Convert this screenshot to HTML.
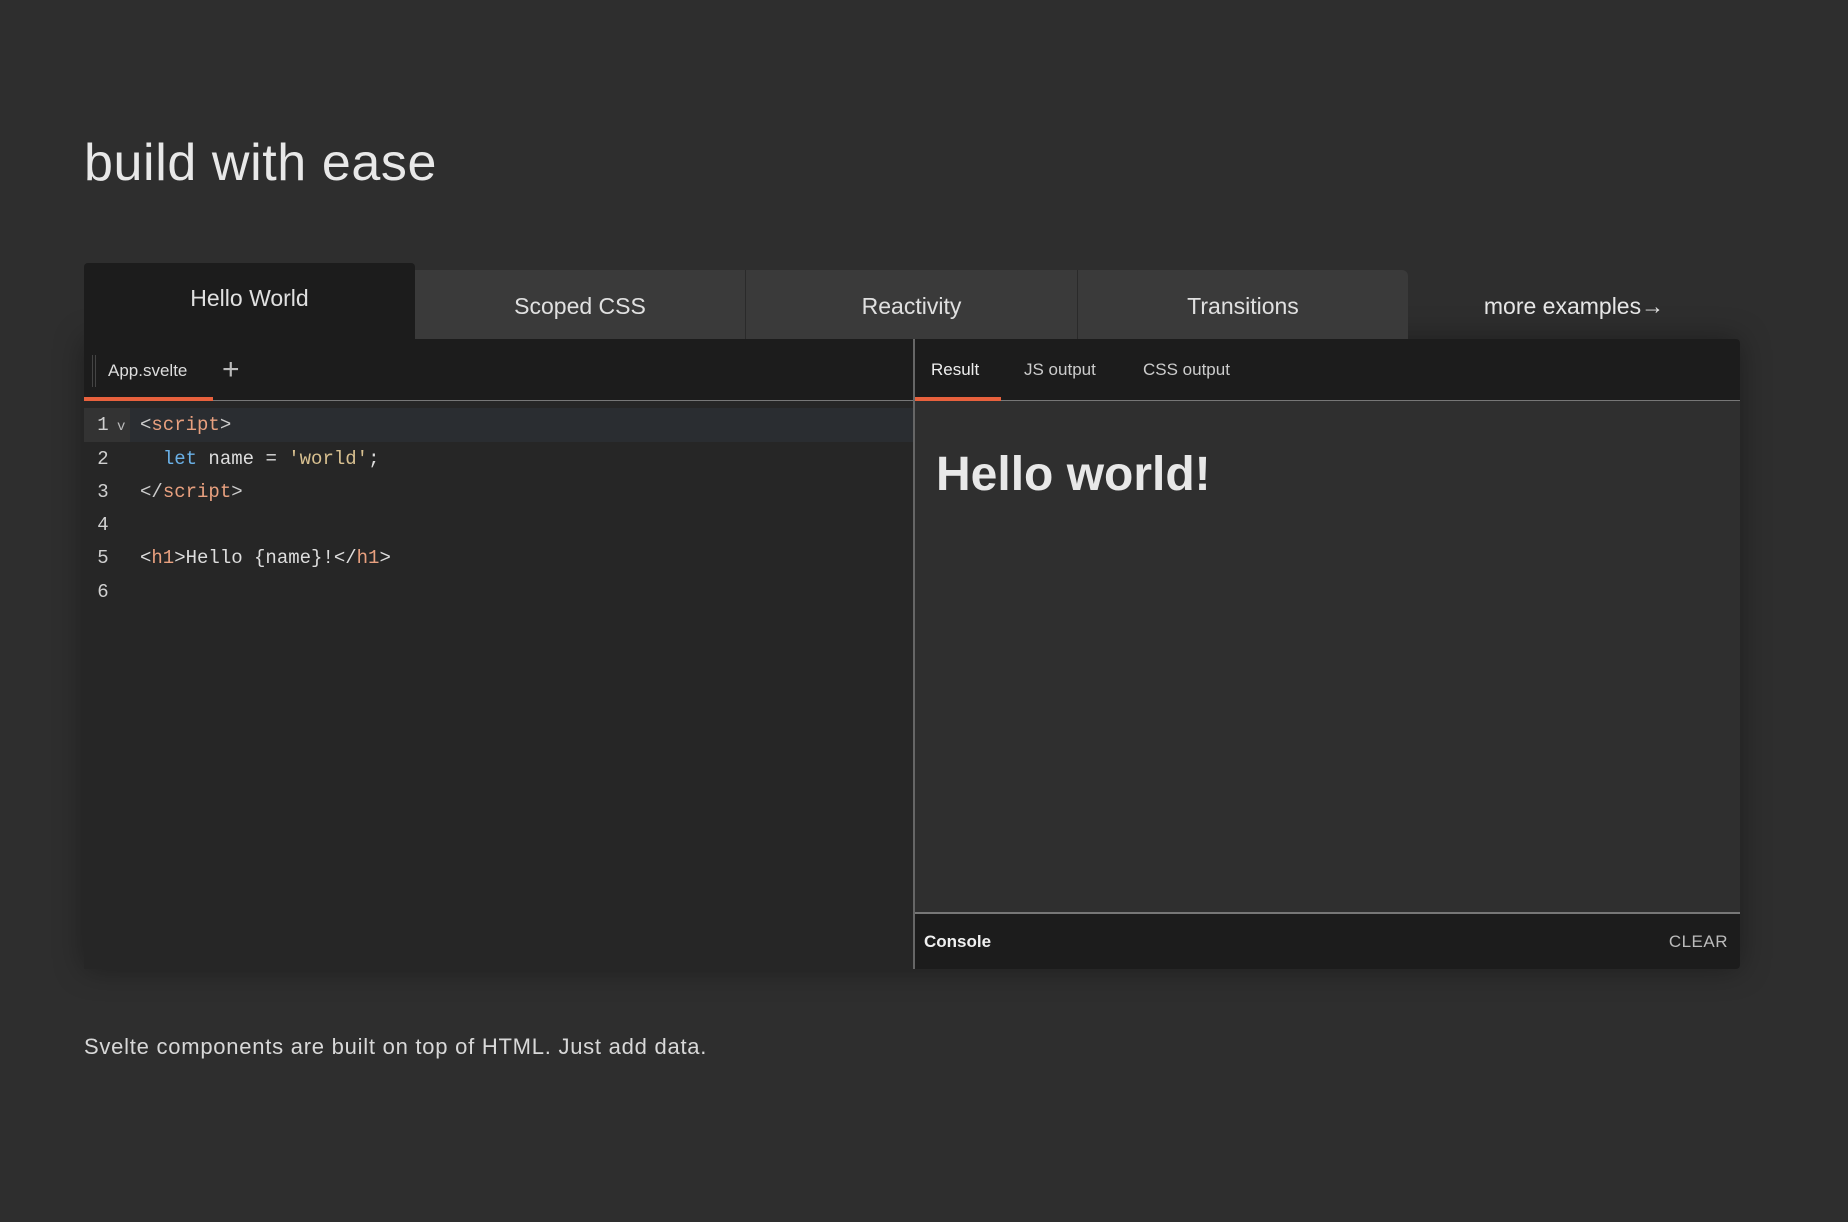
<!DOCTYPE html>
<html><head><meta charset="utf-8"><style>
*{margin:0;padding:0;box-sizing:border-box}
body{width:1848px;height:1222px;background:#2e2e2e;font-family:"Liberation Sans",sans-serif;color:#e6e6e6;position:relative;overflow:hidden}
.a{position:absolute}
h1{position:absolute;left:84px;top:133px;font-size:52px;font-weight:400;color:#e8e8e8;letter-spacing:0.6px}
.tab{position:absolute;top:270px;height:69px;background:#3a3a3a;color:#e0e0e0;font-size:23px;display:flex;align-items:center;justify-content:center;padding-top:4px}
.mono{font-family:"Liberation Mono",monospace;font-size:19px}
.ln{position:absolute;left:84px;width:46px;text-align:center;color:#d0d0d0;padding-right:8px}
.code{position:absolute;left:140px;color:#ddd;white-space:pre}
.t{color:#e8a07f}.k{color:#6ab0e6}.s{color:#d8c090}.g{color:#ccc}
</style></head><body>
<h1>build with ease</h1>
<div class="a" style="left:84px;top:339px;width:1656px;height:630px;box-shadow:0 0 30px rgba(0,0,0,.35);border-radius:0 4px 4px 4px"></div>
<div class="tab" style="left:84px;top:263px;width:331px;height:76px;background:#1c1c1c;border-radius:4px 4px 0 0;align-items:flex-start;padding-top:22px">Hello World</div>
<div class="tab" style="left:415px;width:330px">Scoped CSS</div>
<div class="tab" style="left:745px;width:332px;border-left:1px solid #2a2a2a">Reactivity</div>
<div class="tab" style="left:1077px;width:331px;border-left:1px solid #2a2a2a;border-radius:0 6px 0 0">Transitions</div>
<div class="a" style="left:1408px;top:270px;width:332px;height:69px;display:flex;align-items:center;justify-content:center;font-size:23px;color:#e6e6e6;padding-top:4px">more examples→</div>
<div class="a" style="left:84px;top:339px;width:829px;height:630px;background:#262626"></div>
<div class="a" style="left:84px;top:339px;width:829px;height:62px;background:#1c1c1c;border-bottom:1px solid #777"></div>
<div class="a" style="left:92px;top:355px;width:4px;height:32px;border-left:1px solid #444;border-right:1px solid #444"></div>
<div class="a" style="left:108px;top:361px;font-size:17px;color:#ddd">App.svelte</div>
<div class="a" style="left:222px;top:353px;font-size:30px;color:#bbb;font-weight:300">+</div>
<div class="a" style="left:84px;top:397px;width:129px;height:4px;background:#e8613d"></div>
<div class="a" style="left:84px;top:408px;width:829px;height:34px;background:#2a2d31"></div>
<div class="a" style="left:84px;top:408px;width:46px;height:34px;background:#333"></div>
<div class="mono">
<div class="ln" style="top:414px">1</div><div class="a" style="left:117px;top:419px;font-size:14px;color:#bbb">v</div>
<div class="code" style="top:414px"><span class="g">&lt;</span><span class="t">script</span><span class="g">&gt;</span></div>
<div class="ln" style="top:448px">2</div>
<div class="code" style="top:448px">  <span class="k">let</span> name = <span class="s">'world'</span>;</div>
<div class="ln" style="top:481px">3</div>
<div class="code" style="top:481px"><span class="g">&lt;/</span><span class="t">script</span><span class="g">&gt;</span></div>
<div class="ln" style="top:514px">4</div>
<div class="ln" style="top:547px">5</div>
<div class="code" style="top:547px">&lt;<span class="t">h1</span>&gt;Hello {name}!&lt;/<span class="t">h1</span>&gt;</div>
<div class="ln" style="top:581px">6</div>
</div>
<div class="a" style="left:913px;top:339px;width:827px;height:630px;background:#2f2f2f;border-left:2px solid #666;border-radius:0 4px 4px 0;overflow:hidden">
<div class="a" style="left:0;top:0;width:827px;height:62px;background:#1c1c1c;border-bottom:1px solid #777"></div>
<div class="a" style="left:16px;top:21px;font-size:17px;color:#eee">Result</div>
<div class="a" style="left:109px;top:21px;font-size:17px;color:#ccc">JS output</div>
<div class="a" style="left:228px;top:21px;font-size:17px;color:#ccc">CSS output</div>
<div class="a" style="left:0;top:58px;width:86px;height:4px;background:#e8613d"></div>
<div class="a" style="left:21px;top:108px;font-size:48px;font-weight:700;color:#e8e8e8;letter-spacing:0px">Hello world!</div>
<div class="a" style="left:0;top:573px;width:827px;height:57px;background:#1c1c1c;border-top:2px solid #777"></div>
<div class="a" style="left:9px;top:593px;font-size:17px;font-weight:700;color:#f0f0f0">Console</div>
<div class="a" style="right:12px;top:593px;font-size:17px;color:#bbb;letter-spacing:0.5px">CLEAR</div>
</div>
<div class="a" style="left:84px;top:1034px;font-size:22px;color:#d8d8d8;letter-spacing:0.75px">Svelte components are built on top of HTML. Just add data.</div>
</body></html>
